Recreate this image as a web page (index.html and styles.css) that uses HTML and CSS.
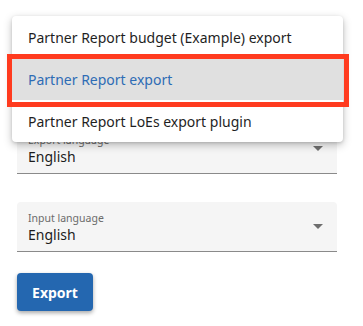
FILE: index.html
```html
<!DOCTYPE html>
<html>
<head>
<meta charset="utf-8">
<link rel="stylesheet" href="styles.css">
</head>
<body>
<div class="page">
  <form class="form">
    <div class="field">
      <div class="field-text">
        <span class="label">Export language</span>
        <span class="value">English</span>
      </div>
      <span class="arrow"></span>
    </div>
    <div class="field">
      <div class="field-text">
        <span class="label">Input language</span>
        <span class="value">English</span>
      </div>
      <span class="arrow"></span>
    </div>
    <button type="button" class="btn">Export</button>
  </form>
  <ul class="menu">
    <li class="item">Partner Report budget (Example) export</li>
    <li class="item selected">Partner Report export</li>
    <li class="item">Partner Report LoEs export plugin</li>
  </ul>
  <div class="highlight"></div>
</div>
</body>
</html>
```
FILE: styles.css
```css
html, body {
  margin: 0;
  padding: 0;
  background: #ffffff;
}
body {
  font-family: "Noto Sans", "Open Sans", sans-serif;
  color: #1f1f1f;
}
.page {
  position: relative;
  width: 363px;
  height: 326px;
}
.form {
  padding: 124px 26px 0 17px;
  display: flex;
  flex-direction: column;
  align-items: flex-start;
}
.field {
  width: 320px;
  height: 50px;
  box-sizing: border-box;
  background: #f5f5f5;
  border-radius: 4px 4px 0 0;
  border-bottom: 1px solid #8a8a8a;
  display: flex;
  align-items: center;
  padding: 0 12px 0 11px;
  margin-bottom: 28px;
}
.field-text {
  flex: 1;
  display: flex;
  flex-direction: column;
  padding-top: 2px;
}
.label {
  font-size: 10.5px;
  line-height: 14px;
  color: #6b6b6b;
}
.value {
  font-size: 14px;
  line-height: 20px;
  color: #1c1c1c;
}
.arrow {
  width: 0;
  height: 0;
  border-left: 5px solid transparent;
  border-right: 5px solid transparent;
  border-top: 5px solid #6e6e6e;
  margin-right: 2px;
}
.btn {
  margin-top: -7px;
  width: 76px;
  height: 38px;
  border: none;
  border-radius: 4px;
  background: #2467b0;
  color: #ffffff;
  font-family: "Noto Sans", "Open Sans", sans-serif;
  font-weight: 700;
  font-size: 14px;
  box-shadow: 0 2px 4px rgba(0, 0, 0, 0.35);
  padding: 0;
}
.menu {
  position: absolute;
  left: 12px;
  top: 16px;
  width: 331px;
  margin: 0;
  padding: 0;
  list-style: none;
  background: #ffffff;
  border-radius: 4px;
  box-shadow: 0 3px 8px rgba(0, 0, 0, 0.25), 0 1px 3px rgba(0, 0, 0, 0.12);
}
.item {
  height: 42px;
  display: flex;
  align-items: center;
  padding-left: 16px;
  font-size: 14px;
  color: #1f1f1f;
}
.item.selected {
  background: #e0e0e0;
  color: #2e6cb5;
}
.highlight {
  position: absolute;
  left: 7px;
  top: 54px;
  width: 342px;
  height: 53px;
  box-sizing: border-box;
  border: 5px solid #ff3b1f;
}
```
